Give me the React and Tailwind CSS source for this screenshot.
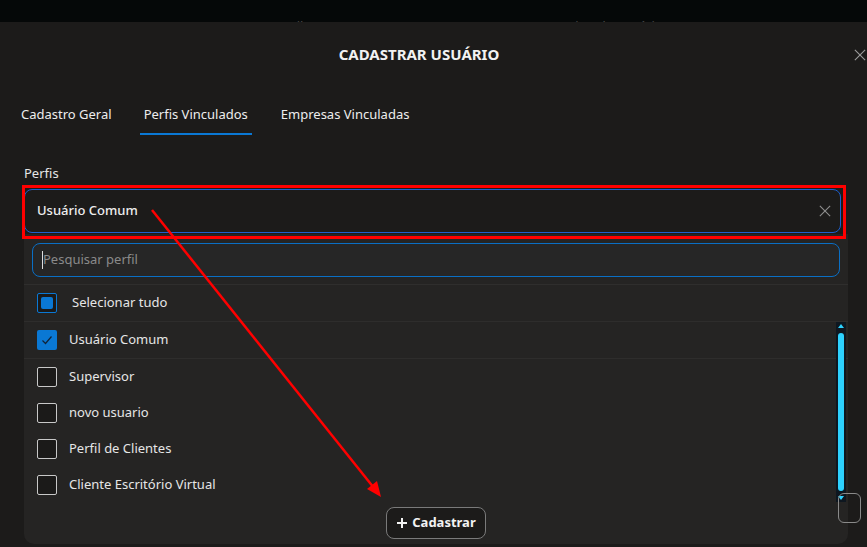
import React from 'react';

const perfis = [
  { name: 'Supervisor', checked: false },
  { name: 'novo usuario', checked: false },
  { name: 'Perfil de Clientes', checked: false },
  { name: 'Cliente Escritório Virtual', checked: false },
];

const CloseIcon = ({ size = 14, className = '' }) => (
  <svg width={size} height={size} viewBox="0 0 14 14" className={className}>
    <path d="M1 1 L13 13 M13 1 L1 13" stroke="currentColor" strokeWidth="1.3" fill="none" />
  </svg>
);

const Checkbox = ({ state }) => {
  if (state === 'checked') {
    return (
      <div className="flex h-[20px] w-[20px] items-center justify-center rounded-[2px] bg-[#0a78d4]">
        <svg width="14" height="14" viewBox="0 0 14 14">
          <path d="M2.5 7.5 L5.5 10.5 L11.5 3.5" stroke="#10243a" strokeWidth="1.2" fill="none" />
        </svg>
      </div>
    );
  }
  if (state === 'partial') {
    return (
      <div className="flex h-[20px] w-[20px] items-center justify-center rounded-[2px] border border-[#0a78d4] bg-[#1b1a19]">
        <div className="h-[12px] w-[12px] rounded-[2px] bg-[#0a78d4]" />
      </div>
    );
  }
  return <div className="h-[20px] w-[20px] rounded-[2px] border border-[#c8c8c8] bg-[#1b1a19]" />;
};

const Row = ({ state, label, textClass = 'ml-[12px]', line = false, tall = false }) => (
  <div
    className={`flex items-center pl-[13px] ${tall ? 'h-[37px]' : 'h-[36px]'} ${line ? 'border-b border-[#2e2d2c]' : ''}`}
  >
    <Checkbox state={state} />
    <span className={`${textClass} text-[13px] text-[#e6e6e6]`}>{label}</span>
  </div>
);

export default function App() {
  return (
    <div className="relative h-[547px] w-[867px] overflow-hidden bg-[#050808] font-['Noto_Sans',sans-serif]">
      {/* página por trás do modal */}
      <div className="relative h-[22px] overflow-hidden text-[13px] text-[#4a4a4a]">
        <span className="absolute left-[270px] top-[17px]">Email</span>
        <span className="absolute left-[568px] top-[17px]">Tipo de usuário</span>
      </div>

      <div className="relative h-[525px] bg-[#1c1b1a]">
        <div className="relative flex h-[64px] items-center justify-center pr-[29px]">
          <h2 className="text-[15px] font-bold text-[#f2f2f2]">CADASTRAR USUÁRIO</h2>
          <CloseIcon size={12} className="absolute right-[1px] top-[27px] text-[#9a9a9a]" />
        </div>

        <div className="flex h-[49px] items-end pl-[17px] text-[13px] text-[#ededed]">
          <div className="border-b-2 border-transparent px-[4px] pb-[9px] leading-[20px]">Cadastro Geral</div>
          <div className="ml-[24px] border-b-2 border-[#0a78d4] px-[4px] pb-[9px] leading-[20px]">Perfis Vinculados</div>
          <div className="ml-[25px] border-b-2 border-transparent px-[4px] pb-[9px] leading-[20px]">Empresas Vinculadas</div>
        </div>

        <div className="mt-[28px] pl-[24px] text-[13px] leading-[20px] text-[#e6e6e6]">Perfis</div>

        <div className="ml-[24px] mt-[6px] flex h-[44px] w-[817px] items-center justify-between rounded-[8px] border border-[#1c5fcf] bg-[#1c1b1a] pl-[12px] pr-[9px]">
          <span className="text-[13px] font-medium text-[#eeeeee]">Usuário Comum</span>
          <CloseIcon size={12} className="text-[#8c8c8c]" />
        </div>

        <div className="ml-[24px] mt-[1px] h-[310px] w-[824px] rounded-b-[10px] bg-[#252423]">
          <div className="pt-[9px]">
            <div className="mx-[8px] flex h-[34px] items-center rounded-[8px] border border-[#0a6fc5] bg-[#262626] pl-[9px]">
              <div className="h-[18px] w-px bg-[#dddddd]" />
              <span className="text-[13px] text-[#8a8a8a]">Pesquisar perfil</span>
            </div>
          </div>
          <div className="mt-[7px] border-t border-[#2f2e2d]">
            <Row state="partial" label="Selecionar tudo" textClass="ml-[15px]" line tall />
            <Row state="checked" label="Usuário Comum" line tall />
            <div className="relative">
              {perfis.map((p) => (
                <Row key={p.name} state={p.checked ? 'checked' : 'empty'} label={p.name} />
              ))}
              {/* barra de rolagem */}
              <div className="absolute right-[2px] top-[-37px] flex h-[180px] w-[10px] flex-col items-center bg-[#0e1720] py-[2px]">
                <div className="h-0 w-0 border-x-[3px] border-b-[4px] border-x-transparent border-b-[#2dd2ff]" />
                <div className="mt-[5px] w-[6px] flex-1 rounded-full bg-[#2dd2ff]" />
                <div className="mt-[5px] h-0 w-0 border-x-[3px] border-t-[4px] border-x-transparent border-t-[#2dd2ff]" />
              </div>
            </div>
          </div>
          <div className="mt-[4px] flex justify-center">
            <button className="flex h-[32px] w-[100px] items-center justify-center gap-[4px] rounded-[8px] border border-[#7a7a7a] bg-[#1c1b1a] text-[13px] font-bold text-[#f2f2f2]">
              <svg width="12" height="12" viewBox="0 0 12 12">
                <path d="M6 1 V11 M1 6 H11" stroke="currentColor" strokeWidth="2" />
              </svg>
              Cadastrar
            </button>
          </div>
        </div>

        {/* botão do modal encoberto pelo dropdown */}
        <div className="absolute left-[838px] top-[471px] h-[30px] w-[23px] rounded-[6px] border border-[#8a8a8a]" />
      </div>

      {/* anotações em vermelho */}
      <div className="pointer-events-none absolute left-[22px] top-[185px] h-[54px] w-[824px] border-[3px] border-[#ff0000]" />
      <svg className="pointer-events-none absolute left-0 top-0" width="867" height="547">
        <line x1="152" y1="210" x2="374" y2="488" stroke="#ff0000" strokeWidth="2.5" />
        <polygon points="381,497 367,489 377,481" fill="#ff0000" />
      </svg>
    </div>
  );
}
